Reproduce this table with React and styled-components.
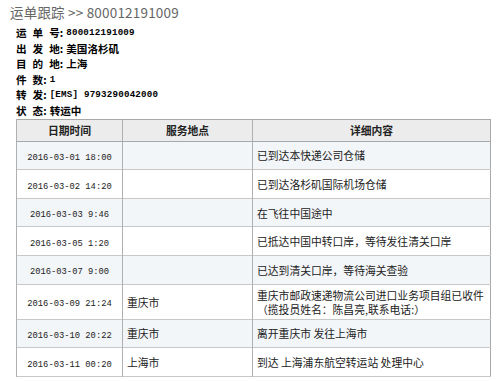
import React from "react";
import styled, { createGlobalStyle } from "styled-components";

const Global = createGlobalStyle`
  html, body { margin: 0; padding: 0; background: #fff; }
  body { font-family: "Noto Sans CJK SC", "Liberation Sans", sans-serif; color: #000; }
`;

const Page = styled.div`
  width: 500px;
  height: 381px;
  overflow: hidden;
  padding: 3px 0 0 10px;
  box-sizing: border-box;
`;

const Title = styled.div`
  font-size: 13.5px;
  line-height: 18px;
  height: 18px;
  color: #666;
  margin-bottom: 4px;
  letter-spacing: 0.2px;
`;

const Info = styled.div`
  margin-left: 6px;
  display: flex;
  flex-direction: column;
`;

const InfoLine = styled.div`
  display: flex;
  align-items: center;
  font-size: 10.6px;
  font-weight: 700;
  line-height: 15.6px;
  height: 15.6px;
  white-space: pre;
  color: #000;
`;

const Label = styled.span`
  display: inline-flex;
  gap: 6px;
  margin-right: 3px;
`;

const Num = styled.span`
  font-family: "Liberation Mono", "DejaVu Sans Mono", monospace;
  font-size: 9.2px;
  font-weight: 700;
  letter-spacing: 0.2px;
`;

const Table = styled.table`
  margin-left: 6px;
  width: 475px;
  border-collapse: collapse;
  table-layout: fixed;
  border: 1px solid #a8a8a8;
  font-size: 10.8px;
  color: #222;
`;

const Th = styled.th`
  background: #ececec;
  font-weight: 700;
  text-align: center;
  padding: 0 4px;
  height: 21px;
  line-height: 14px;
  border-left: 1px solid #b0b0b0;
  border-bottom: 1px solid #a8a8a8;
  color: #222;
`;

const Tr = styled.tr`
  background: ${(p) => (p.$alt ? "#f3f6f9" : "#fff")};
  border-bottom: 1px solid #c8c8c8;
`;

const Td = styled.td`
  border-left: 1px solid #b0b0b0;
  padding: 0 4px;
  height: ${(p) => (p.$tall ? "34px" : "27.6px")};
  line-height: 14px;
  text-align: ${(p) => (p.$center ? "center" : "left")};
  vertical-align: middle;
  white-space: pre-wrap;
`;

const DateText = styled.span`
  font-family: "Liberation Mono", "DejaVu Sans Mono", monospace;
  font-size: 8.8px;
  line-height: 1;
  color: #222;
`;

const rows = [
  ["2016-03-01 18:00", "", "已到达本快递公司仓储"],
  ["2016-03-02 14:20", "", "已到达洛杉矶国际机场仓储"],
  ["2016-03-03 9:46", "", "在飞往中国途中"],
  ["2016-03-05 1:20", "", "已抵达中国中转口岸，等待发往清关口岸"],
  ["2016-03-07 9:00", "", "已达到清关口岸，等待海关查验"],
  ["2016-03-09 21:24", "重庆市", "重庆市邮政速递物流公司进口业务项目组已收件\n（揽投员姓名：陈昌亮,联系电话:）", true],
  ["2016-03-10 20:22", "重庆市", "离开重庆市 发往上海市"],
  ["2016-03-11 00:20", "上海市", "到达 上海浦东航空转运站 处理中心"],
];

function Lbl({ chars }) {
  return (
    <>
      <Label>
        {chars.map((c, i) => (
          <span key={i}>{c}{i === chars.length - 1 ? ":" : ""}</span>
        ))}
      </Label>
    </>
  );
}

export default function App() {
  return (
    <Page>
      <Global />
      <Title>运单跟踪 &gt;&gt; 800012191009</Title>
      <Info>
        <InfoLine><Lbl chars={["运", "单", "号"]} /><Num>800012191009</Num></InfoLine>
        <InfoLine><Lbl chars={["出", "发", "地"]} />美国洛杉矶</InfoLine>
        <InfoLine><Lbl chars={["目", "的", "地"]} />上海</InfoLine>
        <InfoLine><Lbl chars={["件", "数"]} /><Num>1</Num></InfoLine>
        <InfoLine><Lbl chars={["转", "发"]} /><Num>[EMS] 9793290042000</Num></InfoLine>
        <InfoLine><Lbl chars={["状", "态"]} />转运中</InfoLine>
      </Info>
      <Table>
        <colgroup>
          <col style={{ width: 106 }} />
          <col style={{ width: 130 }} />
          <col />
        </colgroup>
        <thead>
          <tr>
            <Th>日期时间</Th>
            <Th>服务地点</Th>
            <Th>详细内容</Th>
          </tr>
        </thead>
        <tbody>
          {rows.map((r, i) => (
            <Tr key={i} $alt={i % 2 === 0}>
              <Td $center $tall={r[3]}><DateText>{r[0]}</DateText></Td>
              <Td $tall={r[3]}>{r[1]}</Td>
              <Td $tall={r[3]}>{r[2]}</Td>
            </Tr>
          ))}
        </tbody>
      </Table>
    </Page>
  );
}
